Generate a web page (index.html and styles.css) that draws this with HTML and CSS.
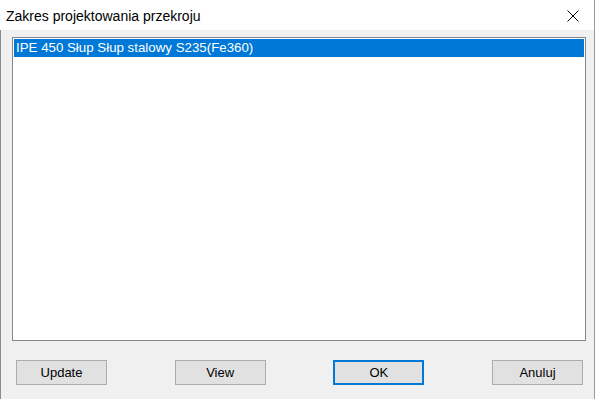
FILE: index.html
```html
<!DOCTYPE html>
<html>
<head>
  <title>Zakres projektowania przekroju</title>
  <link rel="stylesheet" href="styles.css">
</head>
<body>
  <div class="window">
    <div class="titlebar">
      <span class="title">Zakres projektowania przekroju</span>
      <span class="close">
        <svg width="12" height="12" viewBox="0 0 12 12">
          <path d="M0.5 0.5 L11.5 11.5 M11.5 0.5 L0.5 11.5" stroke="#000" stroke-width="1" fill="none"/>
        </svg>
      </span>
    </div>
    <div class="content">
      <div class="listbox">
        <div class="item selected">IPE 450 Słup Słup stalowy S235(Fe360)</div>
      </div>
      <div class="buttons">
        <button class="btn">Update</button>
        <button class="btn">View</button>
        <button class="btn default">OK</button>
        <button class="btn">Anuluj</button>
      </div>
    </div>
  </div>
</body>
</html>
```

FILE: styles.css
```css
body {
  margin: 0;
  background: #f0f0f0;
  font-family: "Liberation Sans", Arial, sans-serif;
}
.window {
  width: 594px;
  height: 399px;
  border-right: 1px solid #9a9a9a;
  display: flex;
  flex-direction: column;
}
.titlebar {
  height: 30px;
  background: #fff;
  display: flex;
  align-items: center;
  justify-content: space-between;
  padding: 0 15px 0 6px;
}
.title {
  font-size: 14px;
  color: #000;
  margin-top: 1px;
}
.close {
  display: flex;
  margin-top: 1px;
}
.content {
  flex: 1;
  border-left: 1px solid #8c8c8c;
  padding: 7px 8px 0 11px;
  display: flex;
  flex-direction: column;
}
.listbox {
  height: 300px;
  width: 570px;
  background: #fff;
  border: 1px solid #828790;
  padding: 1px;
}
.item {
  height: 18px;
  line-height: 18px;
  font-size: 13.3px;
  padding-left: 2px;
}
.selected {
  background: #0078d7;
  color: #fff;
}
.buttons {
  display: flex;
  justify-content: space-between;
  padding: 19px 0 0 4px;
  width: 567px;
}
.btn {
  width: 91px;
  height: 25px;
  background: #e1e1e1;
  border: 1px solid #adadad;
  font-family: "Liberation Sans", Arial, sans-serif;
  font-size: 13px;
  color: #000;
  padding: 0;
}
.default {
  border: 2px solid #0078d7;
}
```
